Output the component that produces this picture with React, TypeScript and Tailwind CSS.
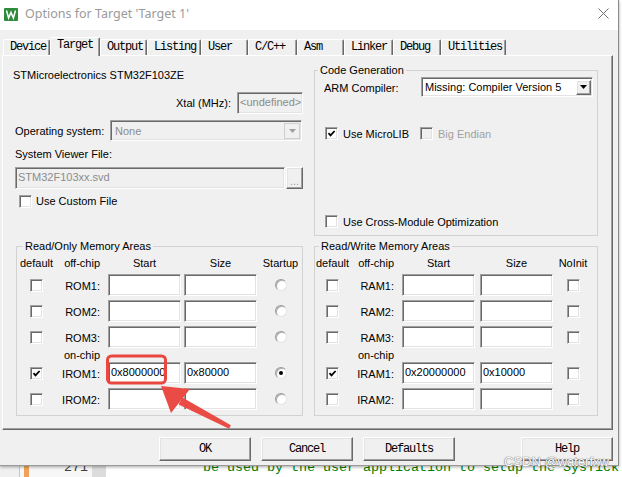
import React from "react";

const sunken =
  "border border-t-[#a0a0a0] border-l-[#a0a0a0] border-r-white border-b-white shadow-[inset_1px_1px_0_#696969,inset_-1px_-1px_0_#e3e3e3]";
const raised =
  "border border-t-white border-l-white border-r-[#696969] border-b-[#696969] shadow-[inset_-1px_-1px_0_#a0a0a0,inset_1px_1px_0_#e3e3e3]";
const mono = "font-['Liberation_Mono',monospace] text-[12px] tracking-[-1.2px]";

function Check({ checked = false, disabled = false }: { checked?: boolean; disabled?: boolean }) {
  return (
    <span
      className={`relative block h-[13px] w-[13px] shrink-0 ${sunken} ${disabled ? "bg-[#f0f0f0]" : "bg-white"}`}
    >
      {checked && (
        <svg className="absolute left-0 top-0" width="11" height="11" viewBox="0 0 11 11">
          <path d="M2.5 5.2 L4.5 7.4 L8.6 3" fill="none" stroke="#000" strokeWidth="1.8" />
        </svg>
      )}
    </span>
  );
}

function Radio({ on = false }: { on?: boolean }) {
  return (
    <span className="relative block h-[12px] w-[12px] rounded-full border border-[#9a9a9a] border-b-[#e3e3e3] border-r-[#e3e3e3] bg-white shadow-[inset_1px_1px_0_#b0b0b0]">
      {on && <span className="absolute left-[3px] top-[3px] h-[4px] w-[4px] rounded-full bg-black" />}
    </span>
  );
}

type Row = { label: string; checked?: boolean; start?: string; size?: string; on?: boolean };

function MemGroup({ left, title, lastHead, rows }: { left: boolean; title: string; lastHead: string; rows: Row[] }) {
  const c1 = left ? "w-[39px]" : "w-[35px]";
  const c2 = left ? "w-[47px] pr-[3px]" : "w-[48px] pr-[4px]";
  const c3 = left ? "w-[78px] pl-[5px]" : "w-[78px] pl-[4px]";
  const c4 = left ? "w-[79px] pl-[3px]" : "w-[80px] pl-[4px]";
  const c5 = left ? "w-[41px]" : "w-[34px]";
  const field = `h-[22px] w-[73px] bg-white pl-[2px] leading-[19px] ${sunken}`;

  const renderRow = (r: Row, cls: string) => (
    <div key={r.label} className={`flex h-[22px] items-center ${cls}`}>
      <div className={`${c1} flex justify-center`}>
        <Check checked={r.checked} />
      </div>
      <div className={`${c2} pt-[2px] text-right`}>{r.label}</div>
      <div className={c3}>
        <div className={field}>{r.start}</div>
      </div>
      <div className={c4}>
        <div className={field}>{r.size}</div>
      </div>
      <div className={`${c5} flex justify-center`}>{left ? <Radio on={r.on} /> : <Check />}</div>
    </div>
  );

  return (
    <fieldset
      className={`${left ? "ml-[2px] w-[287px]" : "ml-[11px] w-[284px]"} border border-[#d2d2d2] pb-[5px]`}
    >
      <legend className={`${left ? "ml-[6px]" : "ml-[4px]"} px-[2px] leading-[14px]`}>{title}</legend>
      <div className="mt-[3px] flex h-[14px] items-center whitespace-nowrap">
        <div className={`${c1} text-center`}>default</div>
        <div className={`${c2} text-right`}>off-chip</div>
        <div className={c3}>
          <div className="w-[73px] text-center">Start</div>
        </div>
        <div className={c4}>
          <div className="w-[73px] text-center">Size</div>
        </div>
        <div className={`${c5} text-center`}>{lastHead}</div>
      </div>
      {renderRow(rows[0], "mt-[4px]")}
      {renderRow(rows[1], "mt-[4px]")}
      {renderRow(rows[2], "mt-[4px]")}
      <div className="flex h-[14px] items-center">
        <div className={c1} />
        <div className={`${c2} text-right`}>on-chip</div>
      </div>
      {renderRow(rows[3], "")}
      {renderRow(rows[4], "mt-[4px]")}
    </fieldset>
  );
}

const tabs = [
  { t: "Device", w: "w-[47px]" },
  { t: "Target", w: "w-[50px]" },
  { t: "Output", w: "w-[47px]" },
  { t: "Listing", w: "w-[54px]" },
  { t: "User", w: "w-[47px]" },
  { t: "C/C++", w: "w-[49px]" },
  { t: "Asm", w: "w-[47px]" },
  { t: "Linker", w: "w-[49px]" },
  { t: "Debug", w: "w-[48px]" },
  { t: "Utilities", w: "w-[65px]" },
];

export default function App() {
  return (
    <div className="relative h-[477px] w-[622px] overflow-hidden bg-white font-['Liberation_Sans',Arial,sans-serif] text-[11px] leading-[14px] text-black">
      <div className="flex h-[466px]">
        <div className="relative z-10 flex h-[466px] w-[619px] flex-col border-b border-r border-b-[#9a9a9a] border-r-[#8a8a8a] bg-[#f0f0f0] shadow-[0_1px_3px_rgba(0,0,0,0.35)]">
          {/* title bar */}
          <div className="flex h-[30px] items-start bg-white pt-[7px]">
            <svg className="ml-[4px] mt-[1px]" width="14" height="13" viewBox="0 0 14 13">
              <rect width="14" height="13" rx="1" fill="#2e8b3c" />
              <path d="M2.5 2.5 L4.6 10 L7 4.5 L9.4 10 L11.5 2.5" fill="none" stroke="#fff" strokeWidth="1.5" />
            </svg>
            <span className="ml-[7px] font-['Noto_Sans',sans-serif] text-[12.5px] leading-[14px] text-[#9a9a9a]">
              Options for Target 'Target 1'
            </span>
            <svg className="ml-auto mr-[9px] mt-[1px]" width="11" height="11" viewBox="0 0 11 11">
              <path d="M0.5 0.5 L10.5 10.5 M10.5 0.5 L0.5 10.5" stroke="#6f6f6f" strokeWidth="1" />
            </svg>
          </div>

          {/* tabs */}
          <div className={`mt-[7px] flex h-[18px] items-end pl-[3px] ${mono}`}>
            {tabs.map((tab) =>
              tab.t === "Target" ? (
                <div
                  key={tab.t}
                  className={`${tab.w} relative z-10 -mb-px h-[19px] rounded-t-[2px] border-l border-r border-t border-l-white border-r-[#696969] border-t-white bg-[#f0f0f0] pl-[6px] leading-[14px] shadow-[inset_-1px_0_0_#a0a0a0]`}
                >
                  {tab.t}
                </div>
              ) : (
                <div
                  key={tab.t}
                  className={`${tab.w} h-[16px] whitespace-pre rounded-t-[2px] border-l border-r border-t border-l-white border-r-[#696969] border-t-white pl-[6px] leading-[14px] shadow-[inset_-1px_0_0_#a0a0a0]`}
                >
                  {tab.t}
                </div>
              )
            )}
          </div>

          {/* tab page */}
          <div className="ml-[2px] h-[375px] w-[611px] border border-b-[#696969] border-l-white border-r-[#696969] border-t-white pl-[11px] pt-[7px] shadow-[inset_-1px_-1px_0_#a0a0a0]">
            <div className="flex">
              <div className="flex w-[290px] flex-col pt-[5px]">
                <div className="-ml-[1px] leading-[14px]">STMicroelectronics STM32F103ZE</div>
                <div className="mt-[10px] flex items-center justify-end">
                  <span className="mr-[6px]">Xtal (MHz):</span>
                  <div
                    className={`mr-[1px] h-[22px] w-[66px] bg-[#f0f0f0] pl-[2px] leading-[18px] text-[#8c8c8c] ${sunken}`}
                  >
                    &lt;undefined&gt;
                  </div>
                </div>
                <div className="mt-[6px] flex items-center">
                  <span className="ml-[1px]">Operating system:</span>
                  <div className={`ml-auto mr-[2px] flex h-[21px] w-[192px] items-center bg-[#f0f0f0] ${sunken}`}>
                    <span className="ml-[4px] flex-1 text-[#8c8c8c]">None</span>
                    <span className="mr-px flex h-[16px] w-[16px] items-center justify-center border border-[#cfcfcf] bg-[#f0f0f0]">
                      <svg width="7" height="4" viewBox="0 0 7 4">
                        <path d="M0 0 H7 L3.5 4 Z" fill="#a0a0a0" />
                      </svg>
                    </span>
                  </div>
                </div>
                <div className="ml-[1px] mt-[6px] leading-[14px]">System Viewer File:</div>
                <div className="mt-[6px] flex">
                  <div
                    className={`ml-[1px] h-[22px] w-[270px] bg-[#f0f0f0] pl-[2px] leading-[18px] text-[#8c8c8c] ${sunken}`}
                  >
                    STM32F103xx.svd
                  </div>
                  <div
                    className={`ml-[1px] flex h-[22px] w-[17px] items-end justify-center pb-[2px] leading-[10px] text-[#a0a0a0] ${raised}`}
                  >
                    ...
                  </div>
                </div>
                <div className="ml-[5px] mt-[5px] flex items-center">
                  <Check />
                  <span className="ml-[4px]">Use Custom File</span>
                </div>
              </div>

              <fieldset className="ml-[10px] h-[173px] w-[284px] border border-[#d2d2d2]">
                <legend className="ml-[3px] px-[2px] leading-[14px]">Code Generation</legend>
                <div className="flex h-[158px] flex-col">
                  <div className="flex h-[20px] items-center">
                    <span className="ml-[9px] mt-[2px]">ARM Compiler:</span>
                    <div className={`ml-auto mr-[4px] flex h-[20px] w-[172px] items-center bg-white ${sunken}`}>
                      <span className="ml-[3px] flex-1">Missing: Compiler Version 5</span>
                      <span className={`mr-px flex h-[15px] w-[15px] items-center justify-center bg-[#f0f0f0] ${raised}`}>
                        <svg width="7" height="4" viewBox="0 0 7 4">
                          <path d="M0 0 H7 L3.5 4 Z" fill="#000" />
                        </svg>
                      </span>
                    </div>
                  </div>
                  <div className="mt-[30px] flex h-[13px] items-center">
                    <span className="ml-[10px] flex w-[95px] items-center">
                      <Check checked />
                      <span className="ml-[5px]">Use MicroLIB</span>
                    </span>
                    <Check disabled />
                    <span className="ml-[5px] text-[#a0a0a0]">Big Endian</span>
                  </div>
                  <div className="mb-[7px] ml-[10px] mt-auto flex h-[13px] items-center">
                    <Check />
                    <span className="ml-[5px]">Use Cross-Module Optimization</span>
                  </div>
                </div>
              </fieldset>
            </div>

            <div className="mt-[3px] flex items-start">
              <MemGroup
                left
                title="Read/Only Memory Areas"
                lastHead="Startup"
                rows={[
                  { label: "ROM1:" },
                  { label: "ROM2:" },
                  { label: "ROM3:" },
                  { label: "IROM1:", checked: true, start: "0x8000000", size: "0x80000", on: true },
                  { label: "IROM2:" },
                ]}
              />
              <MemGroup
                left={false}
                title="Read/Write Memory Areas"
                lastHead="NoInit"
                rows={[
                  { label: "RAM1:" },
                  { label: "RAM2:" },
                  { label: "RAM3:" },
                  { label: "IRAM1:", checked: true, start: "0x20000000", size: "0x10000" },
                  { label: "IRAM2:" },
                ]}
              />
            </div>
          </div>

          {/* buttons */}
          <div className={`mt-[7px] flex h-[24px] ${mono}`}>
            <div className={`ml-[159px] flex w-[92px] items-center justify-center bg-[#f0f0f0] ${raised}`}>OK</div>
            <div className={`ml-[10px] flex w-[92px] items-center justify-center bg-[#f0f0f0] ${raised}`}>Cancel</div>
            <div className={`ml-[10px] flex w-[92px] items-center justify-center bg-[#f0f0f0] ${raised}`}>Defaults</div>
            <div className={`ml-[66px] flex w-[92px] items-center justify-center bg-[#f0f0f0] ${raised}`}>Help</div>
          </div>
        </div>
        <div className="flex-1 bg-white" />
      </div>

      {/* editor line peeking below dialog */}
      <div className="flex h-[11px] overflow-hidden bg-white font-['Liberation_Mono',monospace] text-[13.33px] leading-[16px]">
        <div className="w-[19px] bg-[#f0f0f0]" />
        <div className="w-px bg-[#c8c8c8]" />
        <div className="w-[4px] bg-[#f7f7f7]" />
        <div className="w-[5px] bg-[#f0a258]" />
        <div className="w-[63px] bg-[#f7f7f7] pr-[4px] text-right text-[#404040]">
          <div className="-mt-[6px]">271</div>
        </div>
        <div className="w-[14px] bg-[#dcdcdc]" />
        <div className="flex-1 whitespace-nowrap pl-[97px] text-[#008000]">
          <div className="-mt-[6px]">be used by the user application to setup the SysTick</div>
        </div>
      </div>

      {/* red annotation */}
      <svg className="pointer-events-none absolute left-0 top-0 z-20" width="622" height="477" viewBox="0 0 622 477">
        <rect x="107.5" y="356" width="58" height="27" rx="4" fill="none" stroke="#e8483f" strokeWidth="3" />
        <polygon points="161,386 190,389 171,413" fill="#ea4b45" />
        <polygon points="182.4,397.5 178.6,404.5 229.1,428.8 230.9,425.2" fill="#ea4b45" />
      </svg>

      {/* watermark */}
      <div className="absolute left-[504px] top-[454px] z-20 font-['Liberation_Sans',sans-serif] text-[13px] leading-[16px] text-white [text-shadow:0_0_1px_#666,0_0_1px_#666]">
        CSDN @waterfxw
      </div>
    </div>
  );
}
